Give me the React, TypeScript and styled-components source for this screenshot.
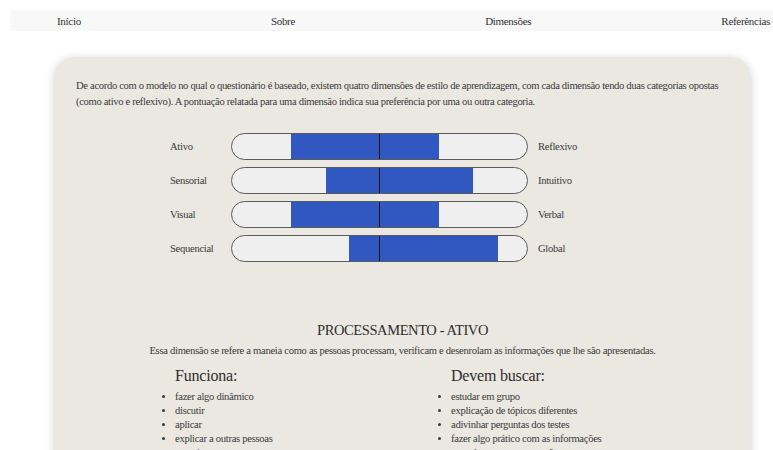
import React from "react"
import styled, { createGlobalStyle } from "styled-components"

const GlobalStyle = createGlobalStyle`
  body {
    margin: 0;
    background: #ffffff;
    font-family: "Liberation Serif", "DejaVu Serif", serif;
    color: #3a3a3a;
    overflow: hidden;
  }
`

const dimensions = [
    { left: "Ativo", right: "Reflexivo", start: 20, size: 50 },
    { left: "Sensorial", right: "Intuitivo", start: 31.8, size: 50 },
    { left: "Visual", right: "Verbal", start: 20, size: 50 },
    { left: "Sequencial", right: "Global", start: 39.8, size: 50.4 },
]

const works = ["fazer algo dinâmico", "discutir", "aplicar", "explicar a outras pessoas", "experimentar"]
const shouldSeek = [
    "estudar em grupo",
    "explicação de tópicos diferentes",
    "adivinhar perguntas dos testes",
    "fazer algo prático com as informações",
    "estender suas compreensões",
]

const App = () => {
    return (
        <>
            <GlobalStyle />
            <Nav>
                <NavLink>Início</NavLink>
                <NavLink>Sobre</NavLink>
                <NavLink>Dimensões</NavLink>
                <NavLink>Referências</NavLink>
            </Nav>

            <Card>
                <Intro>
                    De acordo com o modelo no qual o questionário é baseado, existem quatro dimensões de estilo de aprendizagem, com cada dimensão tendo duas categorias opostas (como ativo e reflexivo). A pontuação relatada para uma dimensão indica sua preferência por uma ou outra categoria.
                </Intro>

                <Scales>
                    {dimensions.map((dim) => (
                        <ScaleRow key={dim.left}>
                            <ScaleLabel>{dim.left}</ScaleLabel>
                            <Bar>
                                <Fill style={{ left: `${dim.start}%`, width: `${dim.size}%` }} />
                            </Bar>
                            <ScaleLabel $right>{dim.right}</ScaleLabel>
                        </ScaleRow>
                    ))}
                </Scales>

                <Section>
                    <SectionTitle>PROCESSAMENTO - ATIVO</SectionTitle>
                    <SectionText>
                        Essa dimensão se refere a maneia como as pessoas processam, verificam e desenrolam as informações que lhe são apresentadas.
                    </SectionText>
                    <Columns>
                        <Column>
                            <ColumnTitle>Funciona:</ColumnTitle>
                            <List>
                                {works.map((item) => <li key={item}>{item}</li>)}
                            </List>
                        </Column>
                        <Column>
                            <ColumnTitle>Devem buscar:</ColumnTitle>
                            <List>
                                {shouldSeek.map((item) => <li key={item}>{item}</li>)}
                            </List>
                        </Column>
                    </Columns>
                </Section>
            </Card>
        </>
    )
}

export default App

const Nav = styled.nav`
    display: flex;
    justify-content: space-between;
    align-items: center;
    height: 21px;
    margin: 10px 0 0 10px;
    padding: 0 3px 0 47px;
    background: #f8f8f8;
`

const NavLink = styled.span`
    font-size: 11px;
    letter-spacing: -0.3px;
    color: #333;
    cursor: pointer;
`

const Card = styled.main`
    width: 695px;
    height: 520px;
    margin: 26px 0 0 55px;
    box-sizing: border-box;
    padding: 21px 21px 0 21px;
    background: #ebe8e2;
    border-radius: 20px;
    box-shadow: 0 2px 10px rgba(0, 0, 0, 0.22);
`

const Intro = styled.p`
    margin: 0;
    font-size: 10.6px;
    letter-spacing: -0.33px;
    line-height: 16px;
    color: #3a3a3a;
`

const Scales = styled.div`
    display: flex;
    flex-direction: column;
    gap: 7px;
    margin: 23px 0 0 94px;
`

const ScaleRow = styled.div`
    display: grid;
    grid-template-columns: 61px 297px auto;
    align-items: center;
`

const ScaleLabel = styled.span<{ $right?: boolean }>`
    padding-left: ${(p) => (p.$right ? "10px" : "0")};
    font-size: 10.6px;
    letter-spacing: -0.3px;
    color: #3a3a3a;
`

const Bar = styled.div`
    position: relative;
    height: 27px;
    box-sizing: border-box;
    border: 1.5px solid #5a5a5a;
    border-radius: 14px;
    background: #efefef;
    overflow: hidden;

    &::after {
        content: "";
        position: absolute;
        top: 0;
        bottom: 0;
        left: calc(50% - 1px);
        width: 1.5px;
        background: #111;
    }
`

const Fill = styled.div`
    position: absolute;
    top: 0;
    bottom: 0;
    background: #3157c1;
`

const Section = styled.section`
    margin-top: 59px;
    display: flex;
    flex-direction: column;
    align-items: center;
`

const SectionTitle = styled.h2`
    margin: 0;
    font-size: 14.5px;
    letter-spacing: -0.4px;
    font-weight: normal;
    line-height: 18px;
    color: #2e2e2e;
`

const SectionText = styled.p`
    margin: 6px 0 0;
    font-size: 10.6px;
    letter-spacing: -0.3px;
    color: #3a3a3a;
`

const Columns = styled.div`
    align-self: stretch;
    display: grid;
    grid-template-columns: 276px 276px;
    padding-left: 99px;
    margin-top: 10px;
`

const Column = styled.div`
    display: flex;
    flex-direction: column;
`

const ColumnTitle = styled.h3`
    margin: 0;
    font-size: 16px;
    letter-spacing: -0.2px;
    font-weight: normal;
    line-height: 20px;
    color: #2e2e2e;
`

const List = styled.ul`
    margin: 4px 0 0;
    padding: 0;
    font-size: 10.6px;
    letter-spacing: -0.3px;
    line-height: 14px;
    color: #3a3a3a;

    li {
        list-style: disc outside;
    }
`
